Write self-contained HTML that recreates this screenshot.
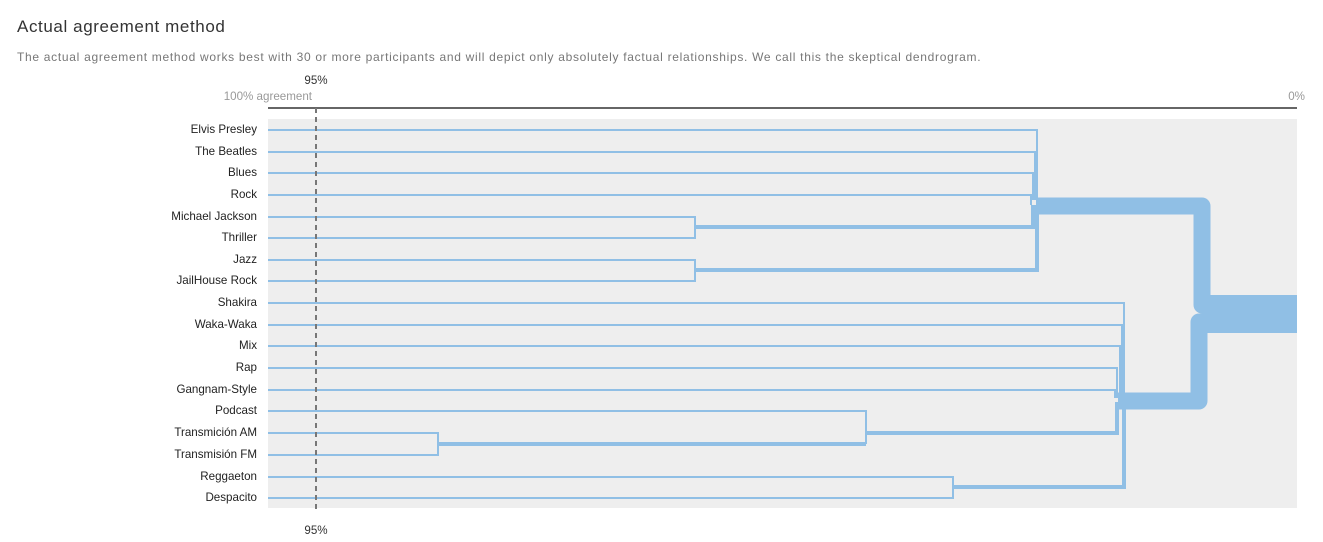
<html><head><style>
body{margin:0;background:#fff;font-family:"Liberation Sans",sans-serif;width:1323px;height:542px;overflow:hidden}
h1{position:absolute;left:17px;top:17px;margin:0;font-size:17px;font-weight:normal;color:#333;letter-spacing:0.6px}
p{position:absolute;left:17px;top:50px;margin:0;font-size:12px;color:#777;letter-spacing:0.7px;white-space:nowrap}
</style></head><body>
<h1>Actual agreement method</h1>
<p>The actual agreement method works best with 30 or more participants and will depict only absolutely factual relationships. We call this the skeptical dendrogram.</p>
<svg width="1323" height="542" style="position:absolute;left:0;top:0" font-family="Liberation Sans" font-size="11.6">
<rect x="268" y="119" width="1029" height="389" fill="#eeeeee"/>
<line x1="268" y1="108" x2="1297" y2="108" stroke="#666" stroke-width="2"/>
<text x="316" y="84" text-anchor="middle" fill="#333">95%</text>
<text x="312" y="100" text-anchor="end" fill="#999">100% agreement</text>
<text x="1305" y="100" text-anchor="end" fill="#999">0%</text>
<text x="316" y="534" text-anchor="middle" fill="#333">95%</text>
<g fill="#222" text-anchor="end">
<text x="257" y="133">Elvis Presley</text><text x="257" y="155">The Beatles</text><text x="257" y="176">Blues</text><text x="257" y="198">Rock</text><text x="257" y="220">Michael Jackson</text><text x="257" y="241">Thriller</text><text x="257" y="263">Jazz</text><text x="257" y="284">JailHouse Rock</text><text x="257" y="306">Shakira</text><text x="257" y="328">Waka-Waka</text><text x="257" y="349">Mix</text><text x="257" y="371">Rap</text><text x="257" y="393">Gangnam-Style</text><text x="257" y="414">Podcast</text><text x="257" y="436">Transmición AM</text><text x="257" y="458">Transmisión FM</text><text x="257" y="480">Reggaeton</text><text x="257" y="501">Despacito</text>
</g>
<g fill="none" stroke="#90bfe5" stroke-width="2">
<polyline points="268,130 1037,130 1037,200"/>
<polyline points="268,152 1035,152 1035,200"/>
<polyline points="268,173 1033,173 1033,200"/>
<polyline points="268,195 1031,195 1031,205"/>
<polyline points="268,217 695,217 695,238 268,238"/>
<polyline points="268,260 695,260 695,281 268,281"/>
<polyline points="268,303 1124,303 1124,398"/>
<polyline points="268,325 1122,325 1122,398"/>
<polyline points="268,346 1120,346 1120,398"/>
<polyline points="268,368 1117,368 1117,398"/>
<polyline points="268,390 1115,390 1115,398"/>
<polyline points="268,411 866,411 866,444"/>
<polyline points="268,433 438,433 438,455 268,455"/>
<polyline points="268,477 953,477 953,498 268,498"/>
</g>
<g fill="none" stroke="#90bfe5" stroke-width="4">
<polyline points="695,227 1033,227 1033,205"/>
<polyline points="695,270 1037,270 1037,205"/>
<polyline points="438,444 866,444"/>
<polyline points="866,433 1117,433 1117,402"/>
<polyline points="953,487 1124,487 1124,402"/>
</g>
<g fill="none" stroke="#90bfe5" stroke-width="17" stroke-linejoin="round">
<polyline points="1036,206 1202,206 1202,305 1210,305"/>
<polyline points="1118,401 1199,401 1199,322 1210,322"/>
</g>
<rect x="1205" y="295" width="92" height="38" fill="#90bfe5"/>
<line x1="316" y1="108" x2="316" y2="512" stroke="#777" stroke-width="2" stroke-dasharray="5,4"/>
</svg>
</body></html>
